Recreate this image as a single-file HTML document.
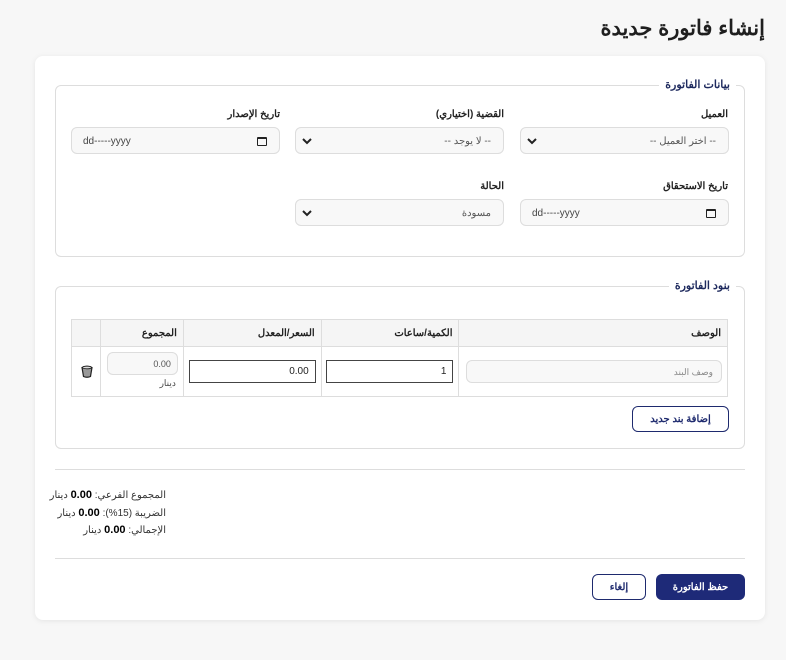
<!DOCTYPE html>
<html lang="ar" dir="rtl"><head><meta charset="utf-8">
<style>
*{box-sizing:border-box;margin:0;padding:0}
body{width:786px;height:660px;background:#f7f7f7;font-family:"Liberation Sans","Noto Sans CJK SC",sans-serif;color:#222;position:relative;overflow:hidden}
.a{position:absolute}
h1{position:absolute;right:21px;top:16px;font-size:21px;font-weight:bold;color:#1f1f1f}
.card{position:absolute;left:35px;top:56px;width:730px;height:564px;background:#fff;border-radius:8px;box-shadow:0 1px 6px rgba(0,0,0,.08)}
.fs{position:absolute;border:1px solid #ddd;border-radius:6px}
.lg{position:absolute;background:#fff;padding:0 6px;font-size:11px;font-weight:bold;color:#1e2a5e;top:-8px;right:8px}
.lbl{position:absolute;font-size:10px;font-weight:bold;color:#222;text-align:right}
.inp{position:absolute;height:27px;background:#f8f8f8;border:1px solid #ddd;border-radius:6px;font-size:10px;color:#555}
.inp .t{position:absolute;right:12px;top:8px}
.chev{position:absolute;left:6px;top:9px}
.cal{position:absolute;right:12px;top:9px;width:10px;height:9px;border:1.5px solid #222;border-top-width:2.5px;border-radius:1px}
.dd{position:absolute;left:11px;top:8px;color:#444;direction:ltr}
table{position:absolute;left:71px;top:319px;width:657px;border-collapse:collapse;font-size:10px}
td,th{border:1px solid #ddd}
th{background:#f5f5f5;height:27px;text-align:right;padding-right:6px;font-weight:bold}
td{height:50px;position:relative}
.btn{position:absolute;height:26px;border-radius:6px;font-size:10px;font-weight:bold;display:flex;align-items:center;justify-content:center}
</style></head><body>
<h1>إنشاء فاتورة جديدة</h1>
<div class="card"></div>

<div class="fs" style="left:55px;top:85px;width:690px;height:172px"><span class="lg">بيانات الفاتورة</span></div>
<div class="lbl" style="right:58px;top:109px">العميل</div>
<div class="lbl" style="right:282px;top:109px">القضية (اختياري)</div>
<div class="lbl" style="right:506px;top:109px">تاريخ الإصدار</div>
<div class="inp" style="left:520px;top:127px;width:209px"><span class="t">-- اختر العميل --</span><svg class="chev" width="10" height="8" viewBox="0 0 10 8"><path d="M1 2l4 4 4-4" stroke="#222" stroke-width="2" fill="none"/></svg></div>
<div class="inp" style="left:295px;top:127px;width:209px"><span class="t">-- لا يوجد --</span><svg class="chev" width="10" height="8" viewBox="0 0 10 8"><path d="M1 2l4 4 4-4" stroke="#222" stroke-width="2" fill="none"/></svg></div>
<div class="inp" style="left:71px;top:127px;width:209px"><span class="dd">dd-----yyyy</span><span class="cal"></span></div>
<div class="lbl" style="right:58px;top:181px">تاريخ الاستحقاق</div>
<div class="lbl" style="right:282px;top:181px">الحالة</div>
<div class="inp" style="left:520px;top:199px;width:209px"><span class="dd">dd-----yyyy</span><span class="cal"></span></div>
<div class="inp" style="left:295px;top:199px;width:209px"><span class="t">مسودة</span><svg class="chev" width="10" height="8" viewBox="0 0 10 8"><path d="M1 2l4 4 4-4" stroke="#222" stroke-width="2" fill="none"/></svg></div>

<div class="fs" style="left:55px;top:286px;width:690px;height:163px"><span class="lg">بنود الفاتورة</span></div>
<table>
<tr><th style="width:269px">الوصف</th><th style="width:138px">الكمية/ساعات</th><th style="width:138px">السعر/المعدل</th><th style="width:83px">المجموع</th><th style="width:29px"></th></tr>
<tr>
<td><div class="inp" style="right:5px;top:13px;width:256px;height:23px;font-size:9px;color:#888"><span class="t" style="right:8px;top:6px">وصف البند</span></div></td>
<td><div class="a" style="right:5px;top:13px;width:127px;height:23px;border:1px solid #444;font-size:10px;padding:5px 6px">1</div></td>
<td><div class="a" style="right:5px;top:13px;width:127px;height:23px;border:1px solid #444;font-size:10px;padding:5px 6px">0.00</div></td>
<td><div class="inp" style="right:5px;top:5px;width:71px;height:23px;font-size:9px"><span class="t" style="right:6px;top:6px">0.00</span></div><div class="a" style="right:7px;top:31px;font-size:9px;color:#444">دينار</div></td>
<td><svg class="a" style="left:9px;top:18px" width="12" height="13" viewBox="0 0 12 13"><path d="M1 2.5Q6 0 11 2.5L9.5 11.5Q6 13 2.5 11.5Z" fill="#999" stroke="#222" stroke-width="1.2"/><ellipse cx="6" cy="2.5" rx="4.5" ry="1.3" fill="#ddd" stroke="#222" stroke-width=".8"/></svg></td>
</tr></table>
<div class="btn" style="left:632px;top:406px;width:97px;border:1.5px solid #1e2a6e;color:#1e2a6e">إضافة بند جديد</div>

<div class="a" style="left:55px;top:469px;width:690px;border-top:1px solid #ddd"></div>
<div class="a" style="right:620px;top:487px;font-size:10px;color:#333;line-height:17.5px;text-align:right;white-space:nowrap">
<div>المجموع الفرعي: <b style="color:#000;font-size:11px">0.00</b> دينار</div>
<div>الضريبة (15%): <b style="color:#000;font-size:11px">0.00</b> دينار</div>
<div>الإجمالي: <b style="color:#000;font-size:11px">0.00</b> دينار</div>
</div>
<div class="a" style="left:55px;top:558px;width:690px;border-top:1px solid #ddd"></div>
<div class="btn" style="left:656px;top:574px;width:89px;background:#1e2a78;color:#fff">حفظ الفاتورة</div>
<div class="btn" style="left:592px;top:574px;width:54px;border:1.5px solid #1e2a6e;color:#1e2a6e">إلغاء</div>
</body></html>
